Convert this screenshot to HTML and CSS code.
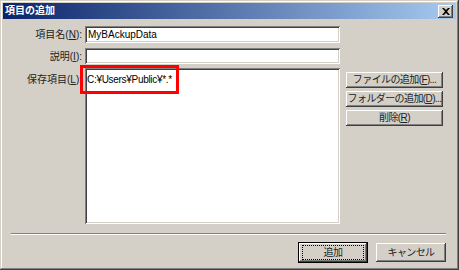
FILE: index.html
```html
<!DOCTYPE html>
<html lang="ja">
<head>
    <meta charset="UTF-8">
    <title>項目の追加</title>
    <link rel="stylesheet" href="styles.css">
</head>
<body>
    <div class="dialog">
        <div class="titlebar">
            <span class="title">項目の追加</span>
            <div class="close-btn">
                <svg width="8" height="7" viewBox="0 0 8 7"><path d="M0 0h2l2 2 2-2h2L5 3.5 8 7H6L4 5 2 7H0l3-3.5z" fill="#000"/></svg>
            </div>
        </div>

        <div class="form">
            <label class="label row1">項目名(<u>N</u>):</label>
            <div class="field row1"><span>MyBAckupData</span></div>

            <label class="label row2">説明(<u>I</u>):</label>
            <div class="field row2"></div>

            <label class="label row3">保存項目(<u>L</u>):</label>
            <div class="listbox">
                <div class="list-item">C:¥Users¥Public¥*.*</div>
                <div class="highlight"></div>
            </div>

            <div class="side-buttons">
                <div class="btn">ファイルの追加(<u>F</u>)...</div>
                <div class="btn">フォルダーの追加(<u>D</u>)...</div>
                <div class="btn">削除(<u>R</u>)</div>
            </div>
        </div>

        <div class="separator"></div>

        <div class="footer">
            <div class="btn default"><span class="focus">追加</span></div>
            <div class="btn wide">キャンセル</div>
        </div>
    </div>
</body>
</html>
```

FILE: styles.css
```css
* { margin: 0; padding: 0; box-sizing: border-box; }
body { width: 459px; height: 270px; overflow: hidden; font-family: "Liberation Sans", "Noto Sans CJK JP", sans-serif; font-size: 10px; color: #000; }

/* Window frame */
.dialog { width: 459px; height: 270px; background: #d4d0c8; box-shadow: inset -1px -1px #404040, inset 1px 1px #d4d0c8, inset -2px -2px #808080, inset 2px 2px #fff; padding: 2px; display: flex; flex-direction: column; }
.titlebar { height: 16px; margin: 1px 1px 0 1px; display: flex; justify-content: space-between; align-items: center; background: linear-gradient(to right, #0a246a, #a6caf0); padding: 0 3px 0 2px; }
.title { color: #fff; font-weight: bold; font-size: 10px; line-height: 14px; }
.close-btn { width: 15px; height: 13px; background: #d4d0c8; display: flex; align-items: center; justify-content: center; box-shadow: inset -1px -1px #404040, inset 1px 1px #fff, inset -2px -2px #808080; }

/* Form area */
.form { display: grid; grid-template-columns: 83px 255px 103px; padding-top: 7px; }
.label { text-align: right; padding-right: 3px; line-height: 17px; white-space: nowrap; color: #222; }
.row1 { grid-row: 1; }
.row2 { grid-row: 2; margin-top: 5px; }
.row3 { grid-row: 3; margin-top: 3px; padding-top: 3px; }
.field { grid-column: 2; height: 17px; background: #fff; box-shadow: inset 1px 1px #808080, inset -1px -1px #fff, inset 2px 2px #404040, inset -2px -2px #d4d0c8; padding: 0 3px; line-height: 17px; }
.field.row2 { height: 16px; }

.listbox { grid-column: 2; grid-row: 3; margin-top: 3px; height: 156px; background: #fff; position: relative; box-shadow: inset 1px 1px #808080, inset -1px -1px #fff, inset 2px 2px #404040, inset -2px -2px #d4d0c8; padding: 3px 2px; }
.list-item { line-height: 16px; padding-top: 1px; letter-spacing: -0.3px; }
.highlight { position: absolute; left: -5px; top: -3px; width: 99px; height: 29px; border: 3px solid #f00; }

.side-buttons { grid-column: 3; grid-row: 3; margin-top: 7px; margin-left: 6px; width: 97px; display: flex; flex-direction: column; gap: 3px; }

/* Buttons */
.btn { height: 16px; display: flex; align-items: center; justify-content: center; background: #d4d0c8; box-shadow: inset -1px -1px #404040, inset 1px 1px #fff, inset -2px -2px #808080, inset 2px 2px #d4d0c8; white-space: nowrap; line-height: 14px; letter-spacing: -0.6px; color: #222; }

.separator { height: 2px; margin: 9px 11px 0 9px; border-top: 1px solid #808080; border-bottom: 1px solid #fff; }

.footer { display: flex; justify-content: flex-end; gap: 9px; padding: 8px 11px 0 0; }
.footer .btn { width: 70px; height: 19px; }
.btn.default { box-shadow: 0 0 0 1px #000, inset -1px -1px #404040, inset 1px 1px #fff, inset -2px -2px #808080; width: 68px; }
.focus { display: flex; align-items: center; justify-content: center; width: 60px; height: 13px; outline: 1px dotted #000; }
```
